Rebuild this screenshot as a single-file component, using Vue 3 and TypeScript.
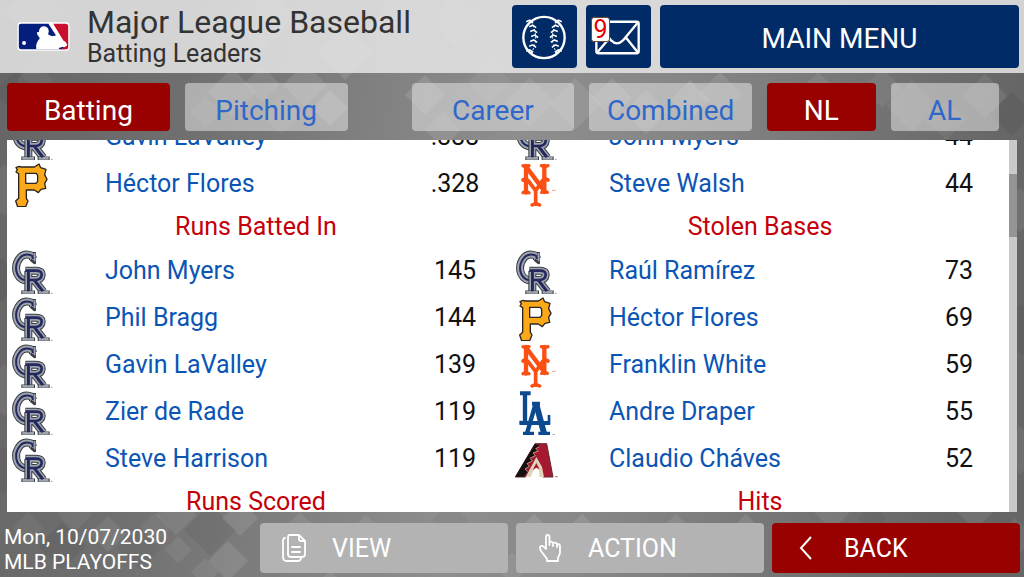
<script setup lang="ts">
import { ref } from 'vue'

type Team = 'rockies' | 'pirates' | 'mets' | 'dodgers' | 'dbacks'
interface Leader { team: Team; name: string; value: string }
interface Section { title: string; rows: Leader[] }

const leader = (team: Team, name: string, value: string): Leader => ({ team, name, value })

const columns: Section[][] = [
  [
    { title: '', rows: [leader('rockies', 'Gavin LaValley', '.333'), leader('pirates', 'Héctor Flores', '.328')] },
    {
      title: 'Runs Batted In',
      rows: [
        leader('rockies', 'John Myers', '145'),
        leader('rockies', 'Phil Bragg', '144'),
        leader('rockies', 'Gavin LaValley', '139'),
        leader('rockies', 'Zier de Rade', '119'),
        leader('rockies', 'Steve Harrison', '119'),
      ],
    },
    { title: 'Runs Scored', rows: [] },
  ],
  [
    { title: '', rows: [leader('rockies', 'John Myers', '44'), leader('mets', 'Steve Walsh', '44')] },
    {
      title: 'Stolen Bases',
      rows: [
        leader('rockies', 'Raúl Ramírez', '73'),
        leader('pirates', 'Héctor Flores', '69'),
        leader('mets', 'Franklin White', '59'),
        leader('dodgers', 'Andre Draper', '55'),
        leader('dbacks', 'Claudio Cháves', '52'),
      ],
    },
    { title: 'Hits', rows: [] },
  ],
]

const viewBoxes: Record<Team, string> = {
  rockies: '21 18 144 141',
  pirates: '21 90 144 141',
  mets: '33 90 144 141',
  dodgers: '33 51 144 141',
  dbacks: '33 192 144 141',
}

const stat = ref('Batting')
const league = ref('NL')

// Decorative diamonds: x, y, half-size, opacity (negative = darker)
const diamonds: number[][] = [
  [35, 12, 30, 0.1], [110, 45, 26, 0.08], [262, 18, 34, 0.12], [345, 52, 28, 0.14], [395, 30, 30, 0.1],
  [455, 20, 26, 0.12], [600, 12, 30, 0.1], [16, 92, 22, -0.06], [35, 80, 18, 0.07], [232, 92, 24, 0.14],
  [262, 84, 18, 0.12], [305, 85, 22, 0.14], [330, 108, 18, 0.2], [282, 115, 20, 0.08], [205, 112, 16, 0.08],
  [425, 95, 20, 0.16], [443, 130, 18, 0.12], [490, 82, 22, 0.08], [530, 102, 24, 0.12], [575, 104, 26, 0.12],
  [612, 98, 20, 0.16], [646, 112, 22, 0.14], [690, 100, 20, 0.16], [720, 94, 22, 0.12], [818, 92, 20, 0.1],
  [882, 88, 20, 0.08], [912, 106, 26, 0.08], [946, 120, 20, 0.08], [985, 96, 22, 0.1], [1012, 114, 22, -0.08],
  [4, 190, 26, 0.08], [2, 280, 22, -0.06], [4, 390, 26, 0.08], [3, 470, 24, -0.06], [1020, 210, 22, 0.1],
  [1022, 330, 26, -0.08], [1020, 450, 24, 0.08],
  [28, 528, 16, 0.07], [62, 546, 24, -0.06], [75, 514, 18, 0.07], [108, 534, 18, 0.1], [140, 548, 22, -0.05],
  [155, 528, 16, 0.07], [176, 515, 20, 0.1], [210, 530, 26, -0.07], [178, 550, 14, 0.09], [228, 561, 20, 0.14],
  [240, 518, 18, 0.13], [205, 572, 14, 0.1], [300, 528, 16, 0.1], [366, 530, 15, 0.1], [450, 520, 18, -0.05],
  [512, 568, 16, 0.1], [534, 532, 18, 0.15], [582, 530, 16, 0.15], [676, 530, 16, 0.12], [746, 532, 18, 0.13],
  [832, 512, 18, 0.1], [872, 518, 14, -0.05], [975, 512, 18, 0.1], [1015, 538, 20, 0.08], [330, 580, 10, 0.1],
]
const diamondPoints = (d: number[]): string =>
  `${d[0]},${d[1] - d[2]} ${d[0] + d[2]},${d[1]} ${d[0]},${d[1] + d[2]} ${d[0] - d[2]},${d[1]}`

const stitches = [23, 28, 33, 38, 43, 48, 53]
const seam = (y: number): number => 13 - Math.round(((y - 38) * (y - 38)) / 50)
</script>

<template>
  <div class="app">
    <svg class="backdrop" viewBox="0 0 1024 577" preserveAspectRatio="none" aria-hidden="true">
      <polygon
        v-for="(d, i) in diamonds"
        :key="i"
        :points="diamondPoints(d)"
        :fill="d[3] > 0 ? '#fff' : '#000'"
        :fill-opacity="Math.abs(d[3])"
      />
    </svg>

    <header class="header">
      <svg class="mlb" viewBox="51 60 160 88" role="img" aria-label="MLB">
        <rect x="52" y="61" width="158" height="86" rx="11" fill="#fff" />
        <path d="M63 65H146L196 143H63Q56 143 56 136V72Q56 65 63 65Z" fill="#041e7e" />
        <path d="M160 65H198Q206 65 206 73V135Q206 143 198 143H182L202 132L198 121L190 116Z" fill="#c8102e" />
        <path d="M109 143Q106 124 120 109L112 98L111 91L117 90Q118 73 133 73Q146 74 147 88L145 98L157 103L173 100L151 65H160L191 116L201 125Q205 132 194 134L179 138L177 143Z" fill="#fff" />
        <circle cx="72" cy="124" r="6" fill="#fff" />
      </svg>
      <div class="titles">
        <h1>Major League Baseball</h1>
        <p>Batting Leaders</p>
      </div>
      <button class="navy square" type="button" aria-label="Games">
        <svg viewBox="0 0 65 64" fill="none" stroke="#fff">
          <circle cx="32" cy="33" r="21" stroke-width="2.4" />
          <path d="M19 17Q28 33 19 49M45 17Q36 33 45 49" stroke-width="1" stroke-dasharray="2 2" />
          <g stroke-width="1.6">
            <path v-for="y in stitches" :key="'l' + y" :d="`M${seam(y) + 6} ${y - 6}l3.500 -1.500l3.500 2.500`" />
            <path v-for="y in stitches" :key="'r' + y" :d="`M${58 - seam(y)} ${y - 6}l-3.500 -1.500l-3.500 2.500`" />
          </g>
        </svg>
      </button>
      <button class="navy square" type="button" aria-label="Messages, 9 unread">
        <svg viewBox="0 0 65 64" fill="none" stroke="#fff" stroke-width="2.4" stroke-linejoin="round" stroke-linecap="round">
          <rect x="10" y="17" width="43" height="32" rx="2" />
          <path d="M11 18L25 36Q31 42 37 36L52 18M40 33L52 48M23 34L11 48" />
        </svg>
        <span class="badge">9</span>
      </button>
      <button class="navy menu" type="button">MAIN MENU</button>
    </header>

    <nav class="tabs">
      <button type="button" :class="{ active: stat === 'Batting' }" @click="stat = 'Batting'">Batting</button>
      <button type="button" :class="{ active: stat === 'Pitching' }" @click="stat = 'Pitching'">Pitching</button>
      <span></span>
      <button type="button">Career</button>
      <button type="button">Combined</button>
      <button type="button" :class="{ active: league === 'NL' }" @click="league = 'NL'">NL</button>
      <button type="button" :class="{ active: league === 'AL' }" @click="league = 'AL'">AL</button>
    </nav>

    <main class="panel">
      <div class="lists">
        <table v-for="(sections, c) in columns" :key="c">
          <colgroup><col class="c-logo" /><col /><col class="c-value" /></colgroup>
          <tbody v-for="(section, s) in sections" :key="s">
            <tr v-if="section.title" class="heading"><th colspan="3">{{ section.title }}</th></tr>
            <tr v-for="row in section.rows" :key="row.name">
              <td>
                <svg class="team" :viewBox="viewBoxes[row.team]" aria-hidden="true">
                  <template v-if="row.team === 'rockies'">
                    <g fill="none" stroke-linejoin="round">
                      <g v-for="layer in [['#3a3d45', 24], ['#9da4ac', 18], ['#25285f', 6]]" :key="layer[0]" :stroke="layer[0]" :stroke-width="layer[1]">
                        <path d="M99 54L96 44Q74 35 61 49Q45 67 49 90Q54 113 75 118L87 113" />
                      </g>
                      <path d="M104 33V66L92 56" stroke="#3a3d45" stroke-width="8" />
                      <path d="M104 36V61" stroke="#9da4ac" stroke-width="5" />
                      <g v-for="layer in [['#3a3d45', 24], ['#9da4ac', 18], ['#25285f', 8]]" :key="layer[0] + 'r'" :stroke="layer[0]" :stroke-width="layer[1]">
                        <path d="M85 90V152M76 89H108Q126 89 125 102Q124 116 105 117H88M103 118L130 152" />
                      </g>
                      <path d="M64 155H105M113 155H149" stroke="#3a3d45" stroke-width="13" />
                      <path d="M67 154H102M116 154H146" stroke="#9da4ac" stroke-width="8" />
                      <path d="M85 92V151M107 122L128 151" stroke="#25285f" stroke-width="8" />
                      <path d="M153 157H158" stroke="#777" stroke-width="2" />
                    </g>
                  </template>
                  <template v-else-if="row.team === 'pirates'">
                    <path fill-rule="evenodd" d="M48 113L57 109L63 111H103L117 102L122 113L138 118L134 134L141 148L134 160L137 175L123 178L115 188L103 180H79V205L84 213L77 230H53L47 213L56 205V131L48 126L52 119ZM77 130V160H108L113 154V136L109 130Z" fill="#fba919" stroke="#2b2720" stroke-width="4" stroke-linejoin="round" />
                    <path d="M84 228H91" stroke="#ccc" stroke-width="2" />
                  </template>
                  <template v-else-if="row.team === 'mets'">
                    <g fill="none" stroke="#fb4f14" stroke-width="13" stroke-linejoin="round" stroke-linecap="round">
                      <path d="M78 108V188M133 108V186M80 112L132 182" />
                      <path d="M69 107Q77 111 87 107M124 107Q134 111 144 107M69 188Q77 183 87 188M125 187Q134 182 142 187" stroke-width="10" />
                      <path d="M69 150Q76 144 84 151L107 182L128 151Q136 144 144 150M107 178V222" stroke-width="11" />
                      <path d="M96 225Q107 219 119 225" stroke-width="10" />
                    </g>
                    <path d="M156 181H167" stroke="#fba080" stroke-width="3" />
                  </template>
                  <template v-else-if="row.team === 'dodgers'">
                    <g fill="none" stroke="#0b4a8f">
                      <path d="M75 65V158M107 97L81 187" stroke-width="13" />
                      <path d="M108 97L132 187" stroke-width="18" />
                      <path d="M60 67H92M60 156H149M96 98H120" stroke-width="12" />
                      <path d="M147 132V161M62 149V161" stroke-width="8" />
                      <path d="M69 188H102M115 188H150" stroke-width="11" />
                    </g>
                    <path d="M158 191H164" stroke="#7a94bb" stroke-width="3" />
                  </template>
                  <template v-else>
                    <path d="M105 218H140L159 318H128L124 286L109 260L93 289L77 318H46Z" fill="#a71930" stroke="#5e2b2c" stroke-width="3" />
                    <path d="M105 219L46 317H72L83 302L74 294L88 285L81 277L96 269L90 261L105 253L99 245L114 238L107 232L121 224Z" fill="#151010" />
                    <path d="M119 227L107 233L115 240L99 246L106 254L90 262L97 270L81 278L88 286L75 294L83 302" fill="none" stroke="#dcc5a4" stroke-width="2" />
                    <path d="M109 258L126 288L132 318H119L117 300L109 287L98 303L93 318H77L92 290Z" fill="#e3d4b9" />
                    <path d="M109 276L119 295L109 290L98 297Z" fill="#a71930" />
                    <path d="M166 317H173" stroke="#a66" stroke-width="3" />
                  </template>
                </svg>
              </td>
              <td><a href="#">{{ row.name }}</a></td>
              <td class="value">{{ row.value }}</td>
            </tr>
          </tbody>
        </table>
      </div>
      <div class="scroll" aria-hidden="true"><span></span><i></i><span></span></div>
    </main>

    <footer class="footer">
      <p class="date">Mon, 10/07/2030<br />MLB PLAYOFFS</p>
      <button type="button">
        <svg viewBox="0 0 24 30" fill="none" stroke="#fff" stroke-width="1.8" stroke-linejoin="round" stroke-linecap="round">
          <path d="M8 2H17L23 8V21Q23 24 20 24H9Q6 24 6 21V4Q6 2 8 2ZM17 2V6Q17 8 19 8H23M3 5Q1 5 1 8V24Q1 28 5 28H15Q19 28 19 25M10 14H18M10 19H18" />
        </svg>
        VIEW
      </button>
      <button type="button">
        <svg viewBox="0 0 24 30" fill="none" stroke="#fff" stroke-width="1.8" stroke-linejoin="round" stroke-linecap="round">
          <path d="M9 28V26L3 18Q1 14 3 13Q5 12 8 16V4Q8 2 9.500 2Q11.500 2 11.500 4V12V9Q14 8 15 10V13V10Q18 9 19 11V14V11Q22 11 22 13V20L20 25V28Z" />
        </svg>
        ACTION
      </button>
      <button type="button" class="back">
        <svg viewBox="0 0 24 30" fill="none" stroke="#fff" stroke-width="2"><path d="M17 4L7 15L17 26" /></svg>
        BACK
      </button>
    </footer>
  </div>
</template>

<style>
body {
  margin: 0;
}
</style>

<style scoped>
.app {
  position: relative;
  isolation: isolate;
  display: flex;
  flex-direction: column;
  height: 100vh;
  overflow: hidden;
  font-family: Roboto, 'Noto Sans', sans-serif;
  background: linear-gradient(100deg, #656565 0%, #6f6f6f 18%, #8e8e8e 48%, #868686 62%, #666 92%);
}
.backdrop {
  position: absolute;
  inset: 0;
  z-index: -1;
  width: 100%;
  height: 100%;
  opacity: 0.75;
}
button {
  border: 0;
  padding: 0;
  font: inherit;
  color: #fff;
  border-radius: 4px;
  cursor: pointer;
}
h1,
p {
  margin: 0;
  font-weight: 400;
}
.header {
  display: flex;
  align-items: center;
  gap: 9px;
  height: 73px;
  box-sizing: border-box;
  padding: 0 5px 0 17px;
  background: rgba(226, 226, 226, 0.88);
}
.mlb {
  width: 53px;
  height: 29px;
  margin-right: 8px;
}
.titles {
  flex: 1;
  color: #333;
  white-space: nowrap;
}
.titles h1 {
  font-size: 32px;
  line-height: 34px;
}
.titles p {
  font-size: 25px;
  line-height: 29px;
}
.navy {
  height: 63px;
  background: #002b66;
}
.square {
  position: relative;
  width: 65px;
}
.square svg {
  display: block;
  width: 65px;
  height: 63px;
}
.badge {
  position: absolute;
  left: 5px;
  top: 12px;
  width: 17px;
  border: 1px solid #6b4a3a;
  border-radius: 3px;
  background: #fff;
  color: #e60000;
  font-size: 25px;
  line-height: 23px;
}
.menu {
  width: 36%;
  max-width: 359px;
  padding-top: 3px;
  font-size: 28px;
}
.tabs {
  display: grid;
  grid-template-columns: 3fr 3fr 34px 3fr 3fr 2fr 2fr;
  gap: 15px;
  padding: 10px 25px 9px 7px;
}
.tabs button {
  height: 48px;
  padding-top: 6px;
  font-size: 28px;
  color: #2f67cb;
  background: rgba(220, 220, 220, 0.58);
}
.tabs button.active {
  color: #fff;
  background: #990000;
}
.panel {
  flex: 1;
  min-height: 0;
  display: flex;
  margin: 0 7px;
  overflow: hidden;
  background: #fff;
}
.lists {
  flex: 1;
  display: grid;
  grid-template-columns: 1fr 1fr;
  align-items: start;
  gap: 6px;
  margin-top: -27px;
}
table {
  width: 100%;
  table-layout: fixed;
  border-collapse: collapse;
  font-size: 25px;
  line-height: 30px;
}
.c-logo {
  width: 98px;
}
.c-value {
  width: 100px;
}
tr {
  height: 47px;
}
.heading {
  height: 40px;
}
th,
td {
  padding: 0;
}
th {
  font-weight: 400;
  color: #c4000a;
}
td a {
  color: #0b55b5;
  text-decoration: none;
}
.value {
  text-align: center;
  color: #111;
}
.team {
  display: block;
  width: 48px;
  height: 47px;
}
.scroll {
  display: grid;
  grid-template-rows: 34fr 63fr 275fr;
  width: 8px;
  background: #c9c9c9;
}
.scroll i {
  background: #949494;
}
.footer {
  display: grid;
  grid-template-columns: repeat(4, 1fr);
  align-items: center;
  gap: 8px;
  height: 65px;
  box-sizing: border-box;
  padding: 7px 4px 0;
}
.date {
  padding-top: 3px;
  color: #fff;
  font-size: 21px;
  line-height: 25px;
}
.footer button {
  display: flex;
  align-items: center;
  gap: 26px;
  height: 50px;
  padding-left: 22px;
  font-size: 25px;
  background: #b3b3b3;
}
.footer button.back {
  background: #990000;
}
.footer svg {
  width: 24px;
  height: 30px;
}
</style>
